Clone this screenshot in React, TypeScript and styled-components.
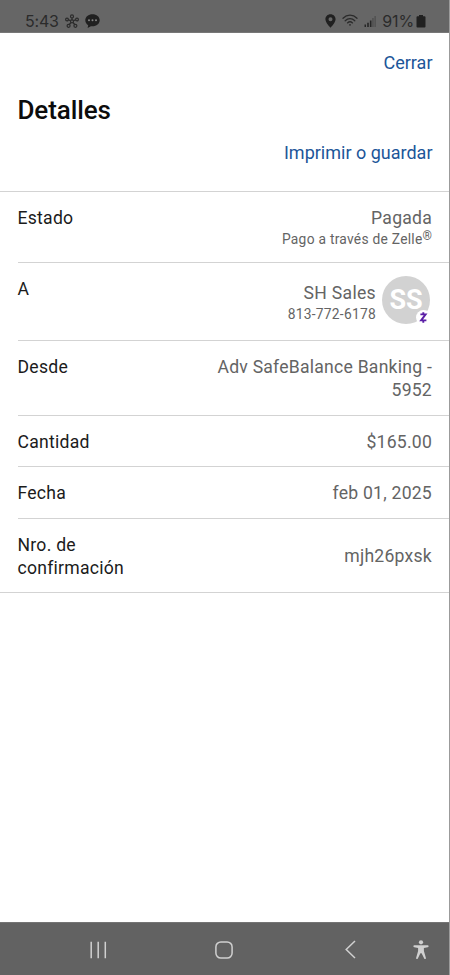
import React from "react";
import styled, { createGlobalStyle } from "styled-components";

const GlobalStyle = createGlobalStyle`
  * { box-sizing: border-box; }
  body { margin: 0; background: #fff; font-family: Roboto, sans-serif; }
  h1, dl, dt, dd { margin: 0; }
`;

const Screen = styled.div`
  width: 450px;
  height: 975px;
  display: flex;
  flex-direction: column;
  overflow: hidden;
  background: #fff;
  border-right: 1px solid #9b9b9b;
`;

const StatusBar = styled.header`
  height: 33px;
  flex: none;
  display: flex;
  justify-content: space-between;
  padding: 9px 24px 0 25px;
  margin-right: -1px;
  background: #666;
  border-bottom: 1px solid #777;
  color: #2b2b2b;
`;

const StatusGroup = styled.div<{ $gap: number }>`
  display: flex;
  align-items: center;
  height: 24px;
  gap: ${(p) => p.$gap}px;
  svg { display: block; flex: none; }
`;

const StatusText = styled.span<{ $spacing: number }>`
  font-family: Inter, sans-serif;
  font-size: 16px;
  letter-spacing: ${(p) => p.$spacing}px;
  line-height: 24px;
`;

const Sheet = styled.main`
  flex: 1;
  display: flex;
  flex-direction: column;
`;

const SheetHeader = styled.div`
  height: 157.5px;
  padding: 18px 16.5px 0 17.5px;
  display: flex;
  flex-direction: column;
`;

const TextButton = styled.button`
  align-self: flex-end;
  padding: 0;
  border: 0;
  background: none;
  color: #1c5699;
  font: 400 18px/24px Roboto, sans-serif;
`;

const Title = styled.h1`
  font-size: 26px;
  font-weight: 500;
  line-height: 34px;
  letter-spacing: -0.1px;
  margin: 18px 0 14px;
  color: #0c0c0c;
`;

const Details = styled.dl`
  border-top: 1px solid #d3d3d3;
  border-bottom: 1px solid #d3d3d3;
`;

const Row = styled.div<{ $height: number; $center?: boolean }>`
  height: ${(p) => p.$height}px;
  margin-left: 17.5px;
  padding: 15px 17px 0 0;
  display: flex;
  justify-content: space-between;
  & + & { border-top: 1px solid #d3d3d3; }
  dd { ${(p) => (p.$center ? "padding-top: 11px;" : "")} }
`;

const Label = styled.dt`
  width: 130px;
  font-size: 17.6px;
  line-height: 22.8px;
  letter-spacing: 0.25px;
  color: #1b1b1b;
`;

const Value = styled.dd`
  width: 225px;
  font-size: 17.6px;
  line-height: 22.8px;
  letter-spacing: 0.23px;
  text-align: right;
  color: #646464;
`;

const Small = styled.div`
  font-size: 13.8px;
  line-height: 21px;
  letter-spacing: 0.26px;
`;

const Registered = styled.sup`
  font-size: 12px;
  line-height: 0;
  letter-spacing: 0;
  vertical-align: 4px;
`;

const Recipient = styled.dd`
  display: flex;
  gap: 6px;
  margin: -2px 2px 0 0;
  color: #646464;
`;

const RecipientText = styled.div`
  padding-top: 6px;
  text-align: right;
  font-size: 17.6px;
  line-height: 22.8px;
  letter-spacing: 0.3px;
`;

const Avatar = styled.div`
  position: relative;
  width: 48px;
  height: 48px;
  border-radius: 50%;
  background: #d2d2d2;
  color: #fff;
  font-size: 27px;
  font-weight: 700;
  line-height: 49px;
  text-align: center;
`;

const ZelleBadge = styled.span`
  position: absolute;
  right: -1px;
  bottom: -1px;
  width: 15px;
  height: 15px;
  border-radius: 50%;
  background: #fff;
  svg { display: block; }
`;

const NavBar = styled.nav`
  height: 53px;
  flex: none;
  display: grid;
  grid-template-columns: 196px 56px 161px 1fr;
  align-items: center;
  margin-right: -1px;
  padding-top: 1px;
  background: #626262;
  border-top: 1px solid #747474;
  svg { display: block; }
`;

const NavItem = styled.button<{ $left: number }>`
  padding: 0 0 0 ${(p) => p.$left}px;
  border: 0;
  background: none;
  color: #d0d0d0;
  justify-self: start;
`;

const Nodes = () => (
  <svg width="14" height="14" viewBox="0 0 14 14" fill="none" stroke="currentColor" strokeWidth="1.2">
    <path d="M7 4v2M3.4 5.9l2.2.7M10.6 5.9l-2.2.7M6 8.5l-1.7 2M8 8.5l1.7 2" />
    <circle cx="7" cy="7.3" r="1.5" />
    <circle cx="7" cy="2.4" r="1.5" />
    <circle cx="2" cy="5.5" r="1.4" />
    <circle cx="12" cy="5.5" r="1.4" />
    <circle cx="3.6" cy="11.8" r="1.5" />
    <circle cx="10.4" cy="11.8" r="1.5" />
  </svg>
);

const Chat = () => (
  <svg width="15" height="14" viewBox="0 0 15 14">
    <path fill="#202020" d="M7.5.3C3.4.3.3 2.9.3 6.3c0 2 1.1 3.8 2.9 4.9L2.6 14l3.3-1.8c.5.1 1 .1 1.6.1 4.1 0 7.2-2.6 7.2-6S11.6.3 7.5.3z" />
    <g fill="#858585"><circle cx="4" cy="6.2" r="1" /><circle cx="7.5" cy="6.2" r="1" /><circle cx="11" cy="6.2" r="1" /></g>
  </svg>
);

const Pin = () => (
  <svg width="11" height="14" viewBox="0 0 11 14">
    <path fill="#202020" fillRule="evenodd" d="M5.5.3C2.6.3.4 2.5.4 5.3c0 3.5 5.1 8.4 5.1 8.4s5.1-4.9 5.1-8.4C10.6 2.5 8.4.3 5.5.3zm0 6.9a2 2 0 1 1 0-4 2 2 0 0 1 0 4z" />
  </svg>
);

const Wifi = () => (
  <svg width="16" height="14" viewBox="0 0 16 14" fill="none" stroke="currentColor" strokeWidth="1.3" strokeLinecap="round">
    <path d="M1 4.2c4-4 10-4 14 0M3.2 6.7c2.8-2.7 6.8-2.7 9.6 0M5.5 8.9c1.5-1.4 3.5-1.4 5 0" />
    <circle cx="8" cy="10.8" r=".9" fill="currentColor" stroke="none" />
  </svg>
);

const Signal = () => (
  <svg width="12" height="13" viewBox="0 0 12 13">
    <path fill="#262626" d="M.5 9.5h1.5V12H.5zM3.2 7.8h1.6V12H3.2zM5.9 5.5h1.6V12H5.9z" />
    <path fill="#4c4c4c" d="M8.3 3h1.3v9H8.3zM10.5 1h1.2v11h-1.2z" />
  </svg>
);

const Battery = () => (
  <svg width="10" height="13" viewBox="0 0 10 13">
    <path fill="#202020" d="M3 0h4v1.2h1.5q1 0 1 1v9.3q0 1-1 1h-7q-1 0-1-1V2.2q0-1 1-1H3z" />
  </svg>
);

const Zelle = () => (
  <svg width="15" height="15" viewBox="0 0 15 15" fill="none" stroke="#5b1fa6" strokeWidth="1.9">
    <path d="M4.4 4.4h5.2L5.1 10.4h5.3M7.3 2.2v2.2M7.3 10.4v2.3" />
  </svg>
);

const Recents = () => (
  <svg width="18" height="18" viewBox="0 0 18 18" stroke="currentColor" strokeWidth="1.5">
    <path d="M2.2.7v16.5M9.2.7v16.5M16.3.7v16.5" />
  </svg>
);

const Home = () => (
  <svg width="18" height="18" viewBox="0 0 18 18" fill="none" stroke="currentColor" strokeWidth="1.5">
    <rect x=".9" y=".9" width="16.2" height="16.2" rx="5" />
  </svg>
);

const Back = () => (
  <svg width="11" height="19" viewBox="0 0 11 19" fill="none" stroke="currentColor" strokeWidth="1.5">
    <path d="M10 1L1.2 9.5 10 18" />
  </svg>
);

const Accessibility = () => (
  <svg width="16" height="20" viewBox="0 0 16 20" fill="currentColor">
    <circle cx="8" cy="2.3" r="2.1" />
    <path d="M1.3 5.3h13.4q.9 0 .9.9t-.9 1l-3.8.7v3.2l2 6.8q.2.9-.6 1.1t-1.1-.6L8.6 13.2H7.4l-2.6 5.2q-.4.8-1.1.6t-.6-1.1l2-6.8V7.9l-3.8-.7q-.9-.1-.9-1t.9-.9z" />
  </svg>
);

export default function App() {
  return (
    <>
      <GlobalStyle />
      <Screen>
        <StatusBar>
          <StatusGroup $gap={6}>
            <StatusText $spacing={-0.2}>5:43</StatusText>
            <Nodes />
            <Chat />
          </StatusGroup>
          <StatusGroup $gap={6}>
            <Pin />
            <Wifi />
            <Signal />
            <StatusGroup $gap={2}>
              <StatusText $spacing={-0.1}>91%</StatusText>
              <Battery />
            </StatusGroup>
          </StatusGroup>
        </StatusBar>
        <Sheet>
          <SheetHeader>
            <TextButton>Cerrar</TextButton>
            <Title>Detalles</Title>
            <TextButton>Imprimir o guardar</TextButton>
          </SheetHeader>
          <Details>
            <Row $height={70}>
              <Label>Estado</Label>
              <Value>
                Pagada
                <Small>Pago a través de Zelle<Registered>®</Registered></Small>
              </Value>
            </Row>
            <Row $height={78.5}>
              <Label>A</Label>
              <Recipient>
                <RecipientText>
                  SH Sales
                  <Small>813-772-6178</Small>
                </RecipientText>
                <Avatar>
                  SS
                  <ZelleBadge><Zelle /></ZelleBadge>
                </Avatar>
              </Recipient>
            </Row>
            <Row $height={75}>
              <Label>Desde</Label>
              <Value>Adv SafeBalance Banking - 5952</Value>
            </Row>
            <Row $height={51}>
              <Label>Cantidad</Label>
              <Value>$165.00</Value>
            </Row>
            <Row $height={52}>
              <Label>Fecha</Label>
              <Value>feb 01, 2025</Value>
            </Row>
            <Row $height={74} $center>
              <Label>Nro. de confirmación</Label>
              <Value>mjh26pxsk</Value>
            </Row>
          </Details>
        </Sheet>
        <NavBar>
          <NavItem $left={89} aria-label="Recientes"><Recents /></NavItem>
          <NavItem $left={19} aria-label="Inicio"><Home /></NavItem>
          <NavItem $left={93} aria-label="Atrás"><Back /></NavItem>
          <NavItem $left={0} aria-label="Accesibilidad"><Accessibility /></NavItem>
        </NavBar>
      </Screen>
    </>
  );
}
